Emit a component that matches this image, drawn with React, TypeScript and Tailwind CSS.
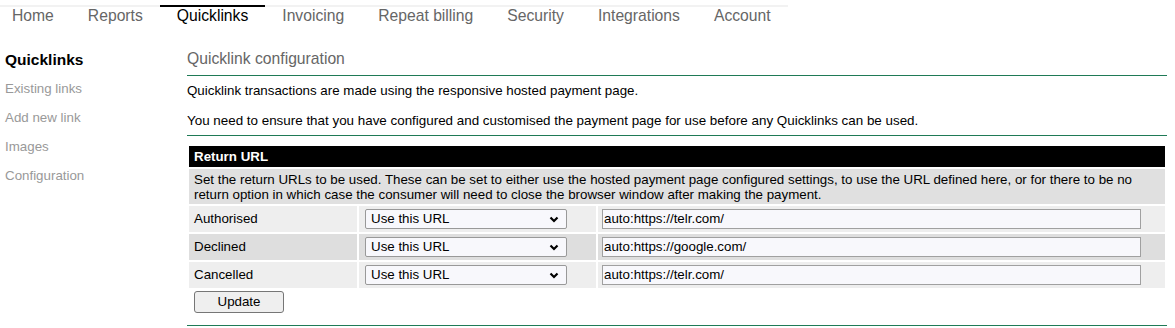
import React from "react";

const tabs = ["Home", "Reports", "Quicklinks", "Invoicing", "Repeat billing", "Security", "Integrations", "Account"];
const side = ["Existing links", "Add new link", "Images", "Configuration"];
const rows = [
  { label: "Authorised", url: "auto:https://telr.com/", bg: "bg-[#eeeeee]" },
  { label: "Declined", url: "auto:https://google.com/", bg: "bg-[#dedede]" },
  { label: "Cancelled", url: "auto:https://telr.com/", bg: "bg-[#eeeeee]" },
];

function Chevron() {
  return (
    <svg width="10" height="7" viewBox="0 0 10 7" className="absolute right-[7px] top-[6px]">
      <polyline points="1.5,1.5 5,5 8.5,1.5" fill="none" stroke="#000" strokeWidth="2.2" />
    </svg>
  );
}

export default function App() {
  return (
    <div className="w-[1175px] h-[328px] overflow-hidden bg-white text-black" style={{ fontFamily: '"Liberation Sans", Arial, sans-serif' }}>
      <div className="pt-[5px]">
        <div className="ml-[-5px] flex w-fit border-t-2 border-[#f2f2f2]">
          {tabs.map((t) => (
            <div
              key={t}
              className={
                "px-[17px] mt-[-2px] border-t-2 text-[15.7px] leading-[16px] pt-[1px] pb-[2px] " +
                (t === "Quicklinks" ? "border-black text-black" : "border-transparent text-[#666666]")
              }
            >
              {t}
            </div>
          ))}
        </div>
      </div>
      <div className="flex mt-[19px]">
        <div className="w-[187px] shrink-0 pl-[5px]">
          <div className="h-[29px] leading-[29px] text-[15.5px] font-bold">Quicklinks</div>
          {side.map((s) => (
            <div key={s} className="h-[29px] leading-[29px] text-[13.33px] text-[#999999]">
              {s}
            </div>
          ))}
        </div>
        <div className="w-[980px] shrink-0">
          <div className="h-[31px] leading-[28px] pb-[3px] text-[15.7px] text-[#666666] border-b border-[#1f7a56]">
            Quicklink configuration
          </div>
          <p className="mt-[7px] leading-[15px] text-[13.33px]">Quicklink transactions are made using the responsive hosted payment page.</p>
          <p className="mt-[15px] leading-[15px] text-[13.4px]">
            You need to ensure that you have configured and customised the payment page for use before any Quicklinks can be used.
          </p>
          <div className="mt-[7px] border-t border-[#1f7a56]" />
          <table className="mt-[8px] w-full border-separate border-spacing-[2px] text-[13.33px]">
            <tbody>
              <tr>
                <td colSpan={3} className="bg-black text-white font-bold h-[21px] leading-[15px] px-[5px] py-0">
                  Return URL
                </td>
              </tr>
              <tr>
                <td colSpan={3} className="bg-[#e0e0e0] px-[5px] pt-[3px] pb-[2px] leading-[15px]">
                  Set the return URLs to be used. These can be set to either use the hosted payment page configured settings, to use the URL defined here, or for there to be no return option in which case the consumer will need to close the browser window after making the payment.
                </td>
              </tr>
              {rows.map((r) => (
                <tr key={r.label} className={r.bg}>
                  <td className="w-[168px] h-[26px] px-[5px] py-0">{r.label}</td>
                  <td className="w-[237px] h-[26px] pl-[6px] py-0">
                    <div className="relative w-[202px] h-[20px] border border-[#999999] rounded-[2px] bg-[#f8f8fc] leading-[18px] pl-[5px]">
                      Use this URL
                      <Chevron />
                    </div>
                  </td>
                  <td className="h-[26px] pl-[4px] py-0">
                    <div className="w-[539px] h-[20px] border border-[#a0a0a0] bg-[#f8f8fc] leading-[18px] pl-[1px]">{r.url}</div>
                  </td>
                </tr>
              ))}
              <tr>
                <td colSpan={3} className="px-[5px] pt-[1px] pb-0">
                  <div className="w-[90px] h-[22px] border border-[#767676] rounded-[3px] bg-[#efefef] text-center leading-[20px]">
                    Update
                  </div>
                </td>
              </tr>
            </tbody>
          </table>
          <div className="mt-[10px] border-t border-[#1f7a56]" />
        </div>
      </div>
    </div>
  );
}
